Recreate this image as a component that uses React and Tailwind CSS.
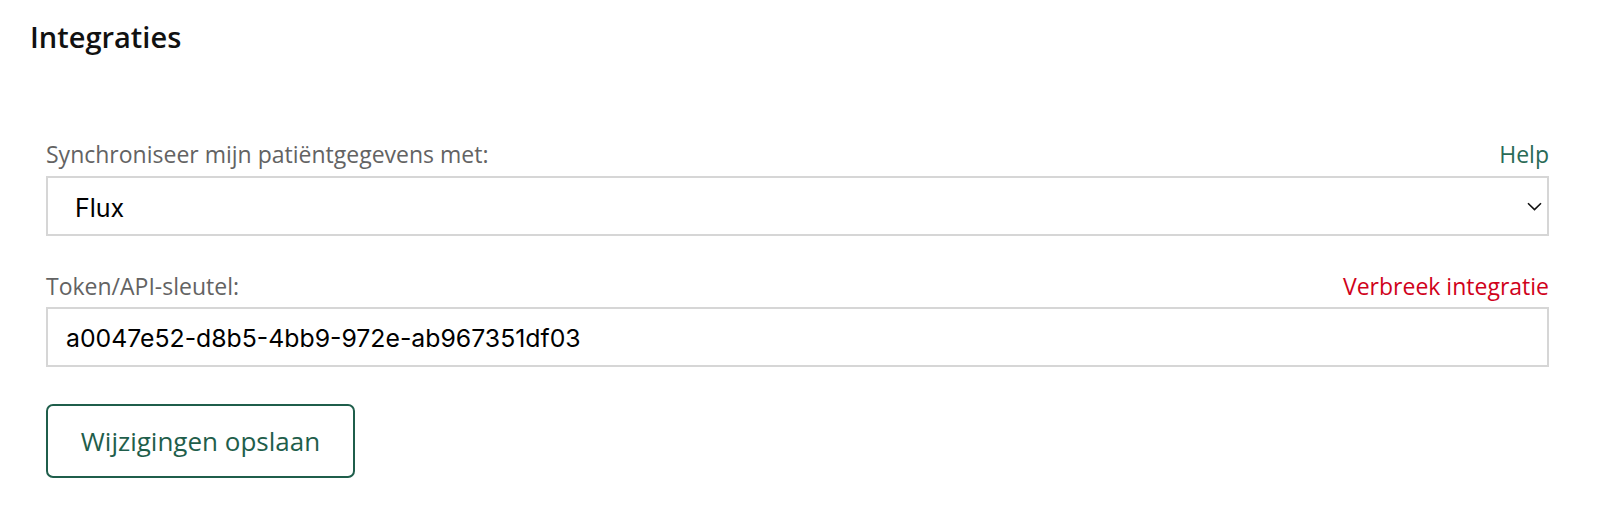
import React from "react";

function Chevron() {
  return (
    <svg width="15" height="9" viewBox="0 0 15 9" fill="none" className="shrink-0">
      <path d="M1 1.2L7.5 7.6L14 1.2" stroke="#111" strokeWidth="1.6" />
    </svg>
  );
}

export default function App() {
  const [provider, setProvider] = React.useState("Flux");
  const [token, setToken] = React.useState("a0047e52-d8b5-4bb9-972e-ab967351df03");

  return (
    <div className="min-h-screen bg-white px-[30px] pt-[19px] font-['Open_Sans',sans-serif] text-[#111]">
      <h2 className="text-[29px] font-semibold leading-[36px]">Integraties</h2>

      <div className="ml-4 mr-[21px] mt-[85px] flex flex-col">
        {/* provider */}
        <div className="flex items-end justify-between text-[23px] leading-[28px]">
          <label className="text-[#636363]">Synchroniseer mijn patiëntgegevens met:</label>
          <a className="text-[#2a6a56]" href="#">Help</a>
        </div>
        <div className="relative mt-[8px] flex h-[60px] items-center justify-between border-2 border-[#d6d6d6] pl-[27px] pr-[5px]">
          <span className="pt-[5px] font-['Inter',sans-serif] text-[25px] text-black">{provider}</span>
          <Chevron />
          <select
            value={provider}
            onChange={(e) => setProvider(e.target.value)}
            className="absolute inset-0 cursor-pointer opacity-0"
          >
            <option>Flux</option>
            <option>Geen</option>
          </select>
        </div>

        {/* token */}
        <div className="mt-[36px] flex items-end justify-between text-[23px] leading-[28px]">
          <label className="text-[#636363]">Token/API-sleutel:</label>
          <a className="text-[#d0021b]" href="#">Verbreek integratie</a>
        </div>
        <input
          value={token}
          onChange={(e) => setToken(e.target.value)}
          className="mt-[7px] h-[60px] border-2 border-[#d6d6d6] px-[18px] pt-[2px] font-['Inter',sans-serif] text-[24.8px] text-black outline-none"
        />

        <button className="mt-[37px] h-[74px] w-[309px] rounded-[7px] border-2 border-[#1f5e4b] text-[26px] text-[#1f5e4b]">
          Wijzigingen opslaan
        </button>
      </div>
    </div>
  );
}
